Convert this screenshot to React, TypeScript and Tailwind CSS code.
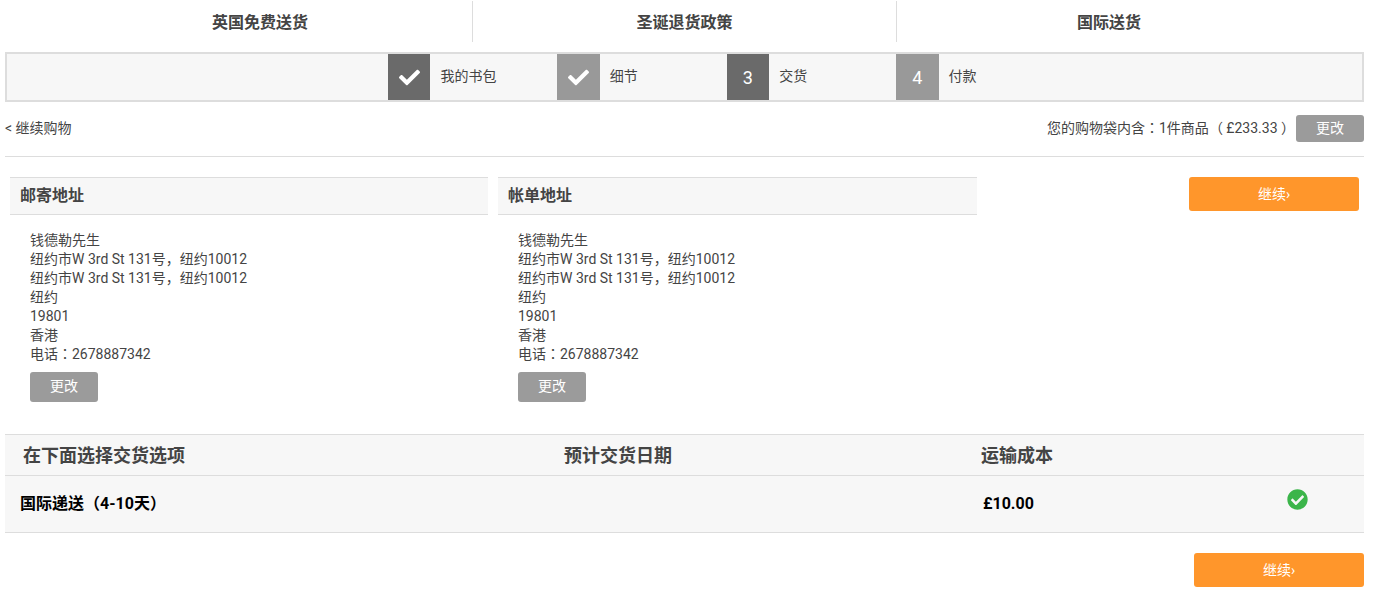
import { FaCheck, FaCheckCircle } from 'react-icons/fa';

const font = "font-['Roboto','Noto_Sans_CJK_SC',sans-serif]";

const addressLines = [
  '钱德勒先生',
  '纽约市W 3rd St 131号，纽约10012',
  '纽约市W 3rd St 131号，纽约10012',
  '纽约',
  '19801',
  '香港',
  '电话：2678887342',
];

// full-width punctuation sits centred in the cell in the original
const Cjk = ({ text }: { text: string }) => (
  <>
    {text.split(/([，：（）])/).map((part, i) => {
      if (i % 2 === 0) return part;
      if (part === '（' || part === '）') {
        return <span key={i} className="font-['Roboto','Noto_Sans_CJK_TC',sans-serif]">{part}</span>;
      }
      return <span key={i} className="font-['Roboto','Noto_Sans_CJK_KR',sans-serif]">{part}</span>;
    })}
  </>
);

const Step = ({ dark, label, num }: { dark: boolean; label: string; num?: string }) => (
  <div className="flex w-[169.4px] shrink-0 items-center">
    <div className={`flex h-[46px] w-[42.5px] items-center justify-center text-white text-[18px] ${dark ? 'bg-[#6a6a6a]' : 'bg-[#999999]'}`}>
      {num ? num : <FaCheck size={21} />}
    </div>
    <span className="mb-[2px] ml-[10px] text-[14px] text-[#444444]">{label}</span>
  </div>
);

const Address = ({ title, className }: { title: string; className: string }) => (
  <div className={className}>
    <h3 className="flex h-[38px] items-center border-y border-[#dddddd] bg-[#f7f7f7] pl-[10px] text-[16px] font-bold text-[#444444]">
      {title}
    </h3>
    <div className="mt-[16px] pl-[20px] text-[14px] leading-[19px] text-[#444444]">
      {addressLines.map((line, i) => (
        <div key={i}><Cjk text={line} /></div>
      ))}
      <button className="mt-[8px] block h-[30px] w-[68px] rounded-[3px] bg-[#9b9b9b] pb-[2px] text-[14px] text-white">更改</button>
    </div>
  </div>
);

const App = () => {
  return (
    <div className={`h-[598px] w-[1380px] overflow-hidden bg-white ${font}`}>
      {/* top links */}
      <div className="flex pl-[48px] pt-[1px]">
        <div className="flex h-[41px] w-[425px] items-center justify-center border-r border-[#dddddd] pt-[2px] text-[16px] font-bold text-[#444444]">英国免费送货</div>
        <div className="flex h-[41px] w-[424px] items-center justify-center border-r border-[#dddddd] pt-[2px] text-[16px] font-bold text-[#444444]">圣诞退货政策</div>
        <div className="flex h-[41px] w-[424px] items-center justify-center pt-[2px] text-[16px] font-bold text-[#444444]">国际送货</div>
      </div>

      <div className="ml-[5px] w-[1359px]">
        {/* steps */}
        <div className="mt-[10px] flex h-[50px] items-center border-2 border-[#dddddd] bg-[#f7f7f7] pl-[380.9px]">
          <Step dark label="我的书包" />
          <Step dark={false} label="细节" />
          <Step dark label="交货" num="3" />
          <Step dark={false} label="付款" num="4" />
        </div>

        {/* bag summary */}
        <div className="mt-[13px] flex h-[27px] items-center justify-between">
          <span className="text-[14px] text-[#444444]">&lt; 继续购物</span>
          <div className="flex items-center">
            <span className="text-[14px] text-[#444444]"><Cjk text="您的购物袋内含：1件商品（ £233.33 ）" /></span>
            <button className="ml-[1px] h-[27px] w-[68px] rounded-[3px] bg-[#9b9b9b] text-[14px] text-white">更改</button>
          </div>
        </div>
        <div className="mt-[14px] h-px bg-[#dddddd]" />

        {/* addresses */}
        <div className="mt-[20px] flex h-[257px] pl-[5px]">
          <Address title="邮寄地址" className="w-[478px]" />
          <Address title="帐单地址" className="ml-[10px] w-[479px]" />
          <button className="ml-[212px] h-[34px] w-[170px] rounded-[3px] bg-[#ff962b] text-[14px] text-white">继续›</button>
        </div>

        {/* delivery options */}
        <div className="border-b border-[#dddddd] bg-[#f7f7f7]">
          <div className="flex h-[42px] items-center border-y border-[#dddddd] text-[18px] font-bold text-[#444444]">
            <div className="w-[559px] pl-[18px]">在下面选择交货选项</div>
            <div className="w-[417px]">预计交货日期</div>
            <div>运输成本</div>
          </div>
          <div className="flex h-[56px] items-center text-[16px] font-bold text-black">
            <div className="w-[978px] pl-[15px]"><Cjk text="国际递送（4-10天）" /></div>
            <div className="w-[304px]">£10.00</div>
            <FaCheckCircle size={21} className="mb-[10px] text-[#3bb54a]" />
          </div>
        </div>

        <div className="mt-[20px] flex justify-end">
          <button className="h-[34px] w-[170px] rounded-[3px] bg-[#ff962b] text-[14px] text-white">继续›</button>
        </div>
      </div>
    </div>
  );
};

export default App;
